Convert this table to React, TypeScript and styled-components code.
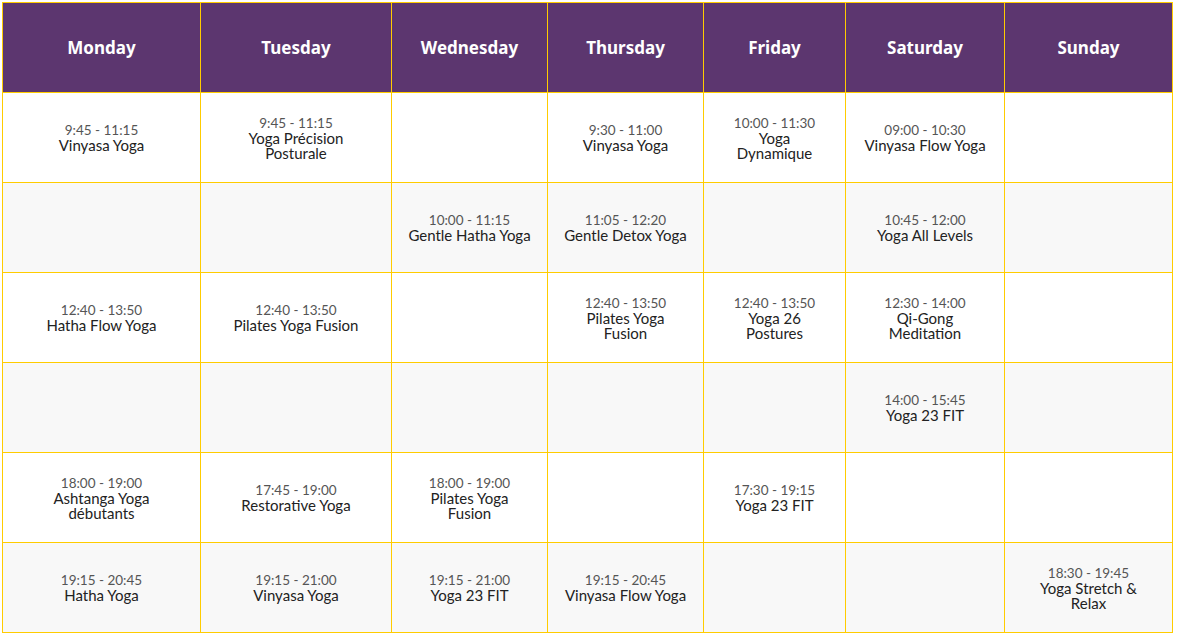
import React from "react";
import styled, { createGlobalStyle } from "styled-components";

interface classType {
  time: string;
  name: string;
}

type cellType = classType | null;

const DAYS = [
  "Monday",
  "Tuesday",
  "Wednesday",
  "Thursday",
  "Friday",
  "Saturday",
  "Sunday",
];

const COL_WIDTHS = [198, 191, 156, 156, 142, 159, 168];

const c = (time: string, name: string): classType => ({ time, name });

const schedule: cellType[][] = [
  [
    c("9:45 - 11:15", "Vinyasa Yoga"),
    c("9:45 - 11:15", "Yoga Précision\nPosturale"),
    null,
    c("9:30 - 11:00", "Vinyasa Yoga"),
    c("10:00 - 11:30", "Yoga\nDynamique"),
    c("09:00 - 10:30", "Vinyasa Flow Yoga"),
    null,
  ],
  [
    null,
    null,
    c("10:00 - 11:15", "Gentle Hatha Yoga"),
    c("11:05 - 12:20", "Gentle Detox Yoga"),
    null,
    c("10:45 - 12:00", "Yoga All Levels"),
    null,
  ],
  [
    c("12:40 - 13:50", "Hatha Flow Yoga"),
    c("12:40 - 13:50", "Pilates Yoga Fusion"),
    null,
    c("12:40 - 13:50", "Pilates Yoga\nFusion"),
    c("12:40 - 13:50", "Yoga 26\nPostures"),
    c("12:30 - 14:00", "Qi-Gong\nMeditation"),
    null,
  ],
  [null, null, null, null, null, c("14:00 - 15:45", "Yoga 23 FIT"), null],
  [
    c("18:00 - 19:00", "Ashtanga Yoga\ndébutants"),
    c("17:45 - 19:00", "Restorative Yoga"),
    c("18:00 - 19:00", "Pilates Yoga\nFusion"),
    null,
    c("17:30 - 19:15", "Yoga 23 FIT"),
    null,
    null,
  ],
  [
    c("19:15 - 20:45", "Hatha Yoga"),
    c("19:15 - 21:00", "Vinyasa Yoga"),
    c("19:15 - 21:00", "Yoga 23 FIT"),
    c("19:15 - 20:45", "Vinyasa Flow Yoga"),
    null,
    null,
    c("18:30 - 19:45", "Yoga Stretch &\nRelax"),
  ],
];

const App = () => {
  return (
    <>
      <GlobalStyle />
      <Page>
        <Timetable>
          <colgroup>
            {COL_WIDTHS.map((w, idx) => (
              <col key={idx} style={{ width: w }} />
            ))}
          </colgroup>
          <thead>
            <tr>
              {DAYS.map((day) => (
                <DayHead key={day}>{day}</DayHead>
              ))}
            </tr>
          </thead>
          <tbody>
            {schedule.map((row, rIdx) => (
              <SlotRow key={rIdx} $odd={rIdx % 2 === 1}>
                {row.map((cell, cIdx) => (
                  <SlotCell key={cIdx}>
                    {cell && (
                      <>
                        <SlotTime>{cell.time}</SlotTime>
                        <SlotName>{cell.name}</SlotName>
                      </>
                    )}
                  </SlotCell>
                ))}
              </SlotRow>
            ))}
          </tbody>
        </Timetable>
      </Page>
    </>
  );
};

export default App;

const GlobalStyle = createGlobalStyle`
  body {
    margin: 0;
    background: #ffffff;
    font-family: "Lato", "Open Sans", sans-serif;
  }
`;

const Page = styled.div`
  padding: 2px 0 0 2px;
`;

const Timetable = styled.table`
  border-collapse: collapse;
  table-layout: fixed;
  width: 1170px;
  border: 1px solid #ffcc00;
`;

const DayHead = styled.th`
  height: 89px;
  padding: 0;
  background: #5c366f;
  color: #ffffff;
  font-family: "Noto Sans", "Open Sans", sans-serif;
  font-size: 17px;
  font-weight: 700;
  text-align: center;
  vertical-align: middle;
  border: 1px solid #ffcc00;
`;

const SlotRow = styled.tr<{ $odd: boolean }>`
  background: ${(p) => (p.$odd ? "#f8f8f8" : "#ffffff")};
`;

const SlotCell = styled.td`
  height: 88px;
  padding: 1px 8px 0;
  text-align: center;
  vertical-align: middle;
  border: 1px solid #ffcc00;
  color: #222222;
`;

const SlotTime = styled.div`
  font-size: 13.5px;
  font-weight: 400;
  line-height: 16px;
  color: #555555;
`;

const SlotName = styled.div`
  font-size: 15px;
  font-weight: 400;
  line-height: 15.5px;
  white-space: pre-line;
`;
